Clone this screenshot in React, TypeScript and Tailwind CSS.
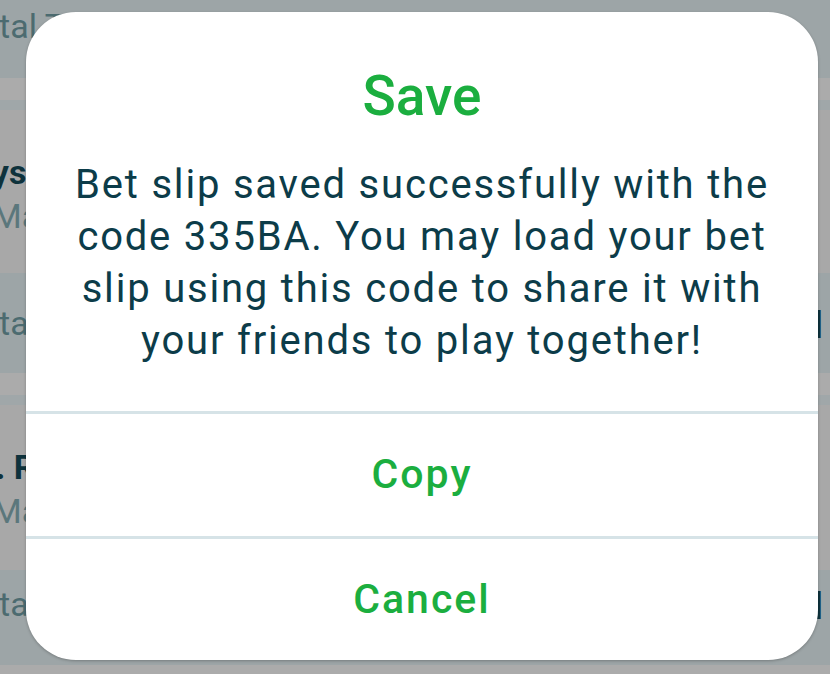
const rows = [
  { kind: "total", h: "h-[78px]", label: "Total Tickets", amount: "", pt: "pt-[6px]" },
  { kind: "gap" },
  { kind: "card", title: "Fridays", sub: "Match", h: "h-[163px]", ml: "ml-[-85px]" },
  { kind: "total", h: "h-[100px]", label: "Total", amount: "$10 M", pt: "pt-[30px]" },
  { kind: "gap" },
  { kind: "card", title: "1. Real", sub: "Match", h: "h-[165px]", ml: "ml-[-24px]" },
  { kind: "total", h: "h-[95px]", label: "Total", amount: "$25 M", pt: "pt-[14px]" },
];

function BackgroundRow({ row }: { row: (typeof rows)[number] }) {
  if (row.kind === "gap") {
    return (
      <div className="flex flex-col">
        <div className="h-[22px] bg-[#ababab]" />
        <div className="h-[10px] bg-[#a0a7a9]" />
      </div>
    );
  }
  if (row.kind === "card") {
    return (
      <div className={`${row.h} bg-[#a8a8a8] flex flex-col pt-[40px]`}>
        <div className={`${row.ml} text-[34px] leading-[44px] font-bold text-[#0e323c] whitespace-nowrap`}>{row.title}</div>
        <div className="ml-[-8px] text-[34px] leading-[44px] text-[#5b777c]">{row.sub}</div>
      </div>
    );
  }
  return (
    <div className={`${row.h} ${row.pt} bg-[#9da5a7] flex justify-between items-start`}>
      <div className="ml-[-39px] text-[34px] leading-[40px] text-[#4c6b70] whitespace-nowrap">{row.label}</div>
      <div className="mr-[7px] mt-[2px] text-[38px] leading-[40px] font-bold text-[#0e323c] whitespace-nowrap">{row.amount}</div>
    </div>
  );
}

export default function App() {
  return (
    <div
      className="relative w-[830px] h-[674px] overflow-hidden bg-[#ababab]"
      style={{ fontFamily: "Roboto, 'Noto Sans', sans-serif" }}
    >
      <div className="flex flex-col">
        {rows.map((row, i) => (
          <BackgroundRow key={i} row={row} />
        ))}
      </div>

      <div className="absolute left-[26px] top-[12px] w-[792px] h-[648px] rounded-[50px] bg-white flex flex-col overflow-hidden shadow-[0_1px_3px_rgba(0,0,0,0.25)]">
        <div className="h-[399px] flex flex-col items-center pt-[52px] px-[30px]">
          <h1 className="text-[55px] leading-[64px] font-medium text-[#1bae3f]">Save</h1>
          <p className="mt-[31px] text-[40px] leading-[52px] tracking-[1.8px] text-center text-[#0c3c49]">
            Bet slip saved successfully with the code 335BA. You may load your bet slip using this code to share it with your friends to play together!
          </p>
        </div>
        <div className="h-[3px] bg-[#d6e3e7]" />
        <button className="h-[122px] flex items-center justify-center text-[41px] tracking-[2px] font-medium text-[#1bae3f]">
          Copy
        </button>
        <div className="h-[3px] bg-[#d6e3e7]" />
        <button className="flex-1 flex items-center justify-center text-[41px] tracking-[2px] font-medium text-[#1bae3f]">
          Cancel
        </button>
      </div>
    </div>
  );
}
